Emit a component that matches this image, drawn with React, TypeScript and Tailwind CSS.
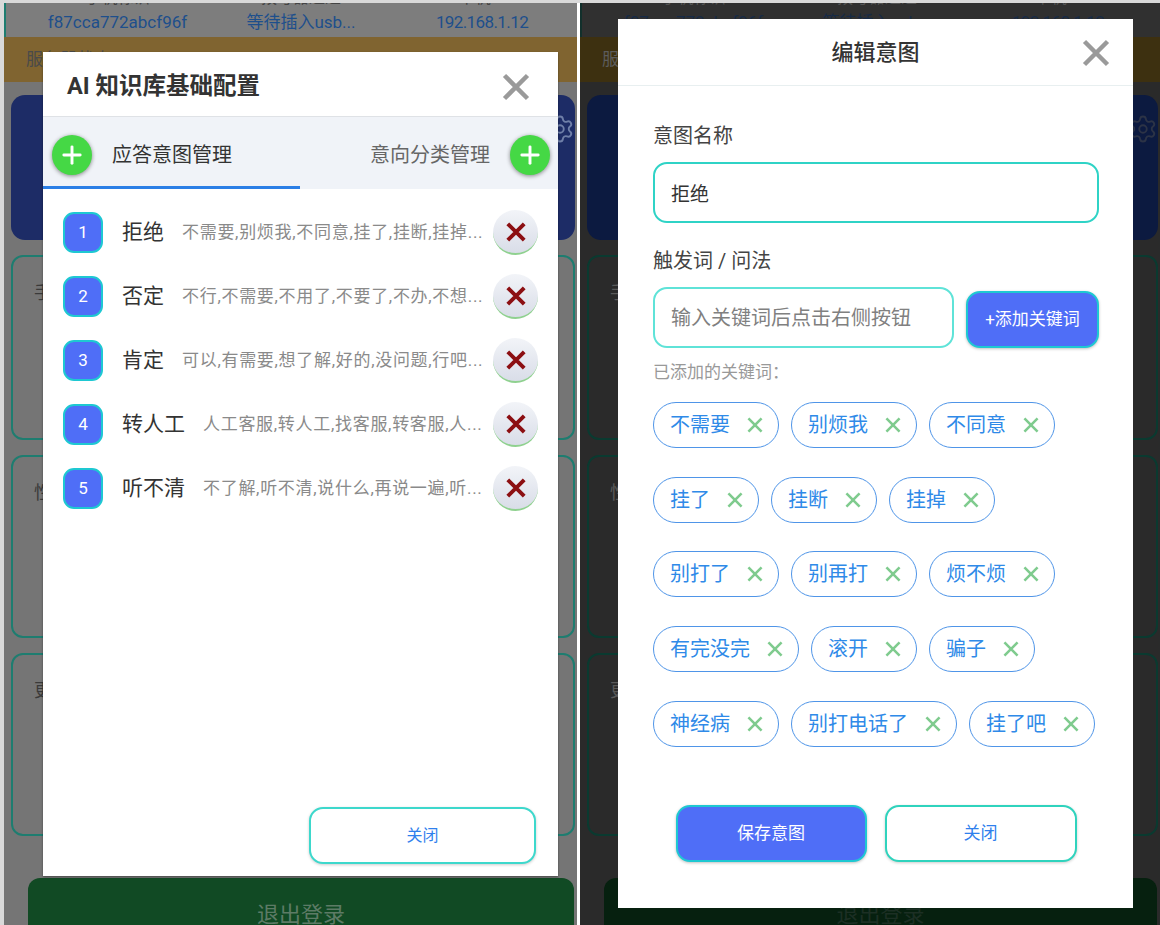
import { Plus, Settings } from 'lucide-react';

const intents = [
    { name: '拒绝', desc: '不需要,别烦我,不同意,挂了,挂断,挂掉...' },
    { name: '否定', desc: '不行,不需要,不用了,不要了,不办,不想...' },
    { name: '肯定', desc: '可以,有需要,想了解,好的,没问题,行吧...' },
    { name: '转人工', desc: '人工客服,转人工,找客服,转客服,人...' },
    { name: '听不清', desc: '不了解,听不清,说什么,再说一遍,听...' },
];

const keywordRows = [
    ['不需要', '别烦我', '不同意'],
    ['挂了', '挂断', '挂掉'],
    ['别打了', '别再打', '烦不烦'],
    ['有完没完', '滚开', '骗子'],
    ['神经病', '别打电话了', '挂了吧'],
];

function CloseIcon({ className, width = 4.5 }: { className: string; width?: number }) {
    return (
        <svg viewBox="0 0 28 28" className={className} fill="none" stroke="currentColor" strokeWidth={width}>
            <path d="M2.5 2.5 25.5 25.5M25.5 2.5 2.5 25.5" />
        </svg>
    );
}

function PhoneBackground({ dark }: { dark: boolean }) {
    const border = dark ? 'border-[#0a3a30]' : 'border-[#1e7d70]';
    return (
        <div className={`flex flex-col h-full overflow-hidden ${dark ? 'bg-[#2a2a2a]' : 'ml-[4px] bg-[#757575]'}`}>
            <div className={`h-[34px] shrink-0 border-l-2 ${dark ? 'border-[#12302c] bg-[#303030]' : 'border-[#1e7d70] bg-[#7d7d7d]'}`}>
                <div className={`grid grid-cols-[223px_144px_218px] text-center whitespace-nowrap text-[16px] leading-[20px] -mt-[15px] ${dark ? 'text-[#555555]' : 'text-[#444444]'}`}>
                    <span>手机标识</span>
                    <span>拨号器通道</span>
                    <span>本机IP</span>
                </div>
                <div className={`grid grid-cols-[223px_144px_218px] text-center whitespace-nowrap text-[17px] leading-[22px] mt-[3px] ${dark ? 'text-[#172a45]' : 'text-[#1d4f8c]'}`}>
                    <span>f87cca772abcf96f</span>
                    <span>等待插入usb...</span>
                    <span className="tracking-[-0.6px]">192.168.1.12</span>
                </div>
            </div>
            <div className={`h-[45px] shrink-0 flex items-center pl-[22px] text-[17px] ${dark ? 'bg-[#3d3010] text-[#5c5c5c]' : 'bg-[#806430] text-[#4a4a4a]'}`}>
                服务器状态
            </div>
            <div className="flex flex-col gap-[15px] pl-[7px] pr-[2px] mt-[13px]">
                <div className={`h-[145px] rounded-[14px] flex justify-end pt-[19px] ${dark ? 'bg-[#0c1a40] text-[#2c3346]' : 'bg-[#1d2c66] text-[#6f7fa8]'}`}>
                    <Settings className="w-[30px] h-[30px]" strokeWidth={1.5} />
                </div>
                {['手机配置', '性能配置', '更多配置'].map((t, i) => (
                    <div
                        key={t}
                        className={`rounded-[12px] border-2 pl-[21px] pt-[22px] text-[18px] ${border} ${dark ? 'text-[#5a5a5a]' : 'text-[#3a3a3a]'} ${i === 0 ? 'h-[185px]' : 'h-[183px]'}`}
                    >
                        {t}
                    </div>
                ))}
            </div>
            <div className={`ml-[24px] mr-[3px] mt-[42px] h-[60px] shrink-0 rounded-t-[12px] text-center pt-[20px] text-[22px] ${dark ? 'bg-[#06200f] text-[#1c2f24]' : 'bg-[#114a24] text-[#5d7b66]'}`}>
                退出登录
            </div>
        </div>
    );
}

function KnowledgeModal() {
    return (
        <div className="absolute left-[43px] top-[49px] w-[515px] h-[824px] bg-white flex flex-col shadow-[0_1px_2px_rgba(0,0,0,0.4)]">
            <div className="h-[65px] shrink-0 flex items-center justify-between pl-[24px] pr-[28px] pt-[5px] border-b border-[#dfe2e6]">
                <h2 className="text-[23.5px] font-bold text-[#333333]">AI 知识库基础配置</h2>
                <CloseIcon className="w-[28px] h-[28px] text-[#9a9a9a]" />
            </div>
            <div className="relative h-[72px] shrink-0 bg-[#f0f3f8] flex items-center pl-[9px] pr-[8px] pt-[4px] text-[20px]">
                <div className="w-[40px] h-[40px] rounded-full bg-[#45d845] flex items-center justify-center shadow-[0_1px_4px_rgba(0,0,0,0.45)]">
                    <Plus className="w-[28px] h-[28px] text-white" strokeWidth={2.5} />
                </div>
                <span className="ml-[20px] text-[#333333]">应答意图管理</span>
                <span className="ml-auto mr-[20px] text-[#666666]">意向分类管理</span>
                <div className="w-[40px] h-[40px] rounded-full bg-[#45d845] flex items-center justify-center shadow-[0_1px_4px_rgba(0,0,0,0.45)]">
                    <Plus className="w-[28px] h-[28px] text-white" strokeWidth={2.5} />
                </div>
                <div className="absolute left-0 bottom-0 w-[257px] h-[3px] bg-[#2b7fe6]" />
            </div>
            <div className="flex-1 flex flex-col gap-[23px] pt-[23px] pl-[20px] pr-[20px]">
                {intents.map((item, i) => (
                    <div key={item.name} className="flex items-center h-[41px]">
                        <div className="w-[40px] h-[41px] shrink-0 rounded-[11px] bg-[#4f6ef7] border-2 border-[#1ec8d2] text-white text-[17px] flex items-center justify-center">
                            {i + 1}
                        </div>
                        <span className="ml-[19px] shrink-0 text-[21px] text-[#333333]">{item.name}</span>
                        <span className="ml-[18px] flex-1 min-w-0 whitespace-nowrap overflow-hidden text-[17px] tracking-[0.7px] text-[#8a8a8a]">{item.desc}</span>
                        <div className="ml-[9px] w-[45px] h-[45px] shrink-0 rounded-full bg-gradient-to-b from-[#f2f4f8] to-[#d9dde8] border-b-2 border-[#8fd18f] flex items-center justify-center">
                            <CloseIcon className="w-[20px] h-[20px] text-[#8c0f12]" width={5.5} />
                        </div>
                    </div>
                ))}
            </div>
            <div className="flex justify-end pr-[22px] pb-[12px]">
                <button className="w-[227px] h-[57px] rounded-[14px] border-2 border-[#3dd8cc] bg-white text-[16px] text-[#2f80ed] shadow-[0_1px_3px_rgba(0,0,0,0.2)]">
                    关闭
                </button>
            </div>
        </div>
    );
}

function EditModal() {
    return (
        <div className="absolute left-[38px] top-[16px] w-[515px] h-[889px] bg-white flex flex-col">
            <div className="relative h-[67px] shrink-0 flex items-center justify-center border-b border-[#e8eff0]">
                <h2 className="text-[22px] font-medium text-[#333333]">编辑意图</h2>
                <CloseIcon className="absolute right-[23px] top-[20px] w-[28px] h-[28px] text-[#9a9a9a]" />
            </div>
            <div className="flex flex-col pl-[35px] pr-[34px]">
                <label className="mt-[36px] text-[20px] leading-[28px] text-[#444444]">意图名称</label>
                <input
                    readOnly
                    value="拒绝"
                    className="mt-[12px] h-[61px] rounded-[14px] border-2 border-[#2fd3c6] px-[16px] text-[19px] text-[#333333] outline-none"
                />
                <label className="mt-[24px] text-[20px] leading-[28px] text-[#444444]">触发词 / 问法</label>
                <div className="mt-[12px] flex gap-[12px] items-end">
                    <input
                        readOnly
                        placeholder="输入关键词后点击右侧按钮"
                        className="w-[301px] h-[61px] rounded-[14px] border-2 border-[#5fe3d8] px-[16px] text-[20px] outline-none placeholder:text-[#808080]"
                    />
                    <button className="flex-1 h-[57px] rounded-[14px] bg-[#4f6ef7] border-2 border-[#1ec8d2] text-white text-[17px] shadow-[0_1px_3px_rgba(0,0,0,0.25)]">
                        +添加关键词
                    </button>
                </div>
                <p className="mt-[12px] text-[17px] leading-[24px] text-[#999999]">已添加的关键词：</p>
                <div className="mt-[18px] flex flex-col gap-[28.7px]">
                    {keywordRows.map((row) => (
                        <div key={row.join()} className="flex gap-[12px]">
                            {row.map((k) => (
                                <div
                                    key={k}
                                    className="h-[46px] rounded-full border-[1.5px] border-[#4f95e8] flex items-center pl-[16px] pr-[15px] gap-[17px] text-[20px] text-[#2f8ae8]"
                                >
                                    {k}
                                    <CloseIcon className="w-[16px] h-[16px] text-[#7fcb8e]" />
                                </div>
                            ))}
                        </div>
                    ))}
                </div>
            </div>
            <div className="mt-[58px] flex justify-center gap-[18px] pl-[1px]">
                <button className="w-[191px] h-[57px] rounded-[14px] bg-[#4f6ef7] border-2 border-[#1ec8d2] text-white text-[17px] shadow-[0_1px_3px_rgba(0,0,0,0.25)]">
                    保存意图
                </button>
                <button className="w-[192px] h-[57px] rounded-[14px] bg-white border-2 border-[#2fd3bd] text-[#2f80ed] text-[17px] shadow-[0_1px_3px_rgba(0,0,0,0.2)]">
                    关闭
                </button>
            </div>
        </div>
    );
}

export default function App() {
    return (
        <div className="w-[1160px] h-[925px] overflow-hidden flex bg-[#d9d9d9] pt-[3px] font-['Roboto','Noto_Sans_CJK_SC',sans-serif]">
            <div className="relative w-[577px] h-full overflow-hidden">
                <PhoneBackground dark={false} />
                <KnowledgeModal />
            </div>
            <div className="w-[3px] shrink-0 bg-white" />
            <div className="relative flex-1 h-full overflow-hidden">
                <PhoneBackground dark={true} />
                <EditModal />
            </div>
        </div>
    );
}
